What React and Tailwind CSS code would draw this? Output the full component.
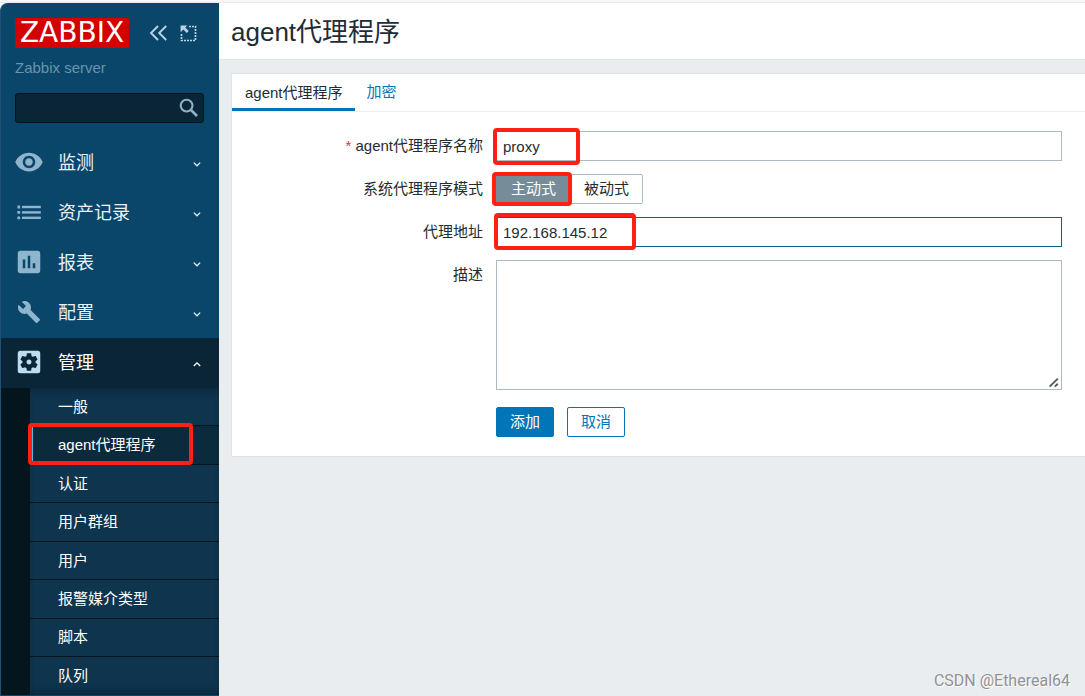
import { useState } from "react";
import {
  MdVisibility,
  MdInsertChart,
  MdBuild,
  MdSettingsApplications,
} from "react-icons/md";

function ListIcon() {
  return (
    <svg width="30" height="30" viewBox="0 0 30 30" fill="currentColor" aria-hidden="true">
      <rect x="3.4" y="8.6" width="2.8" height="2.8" rx="0.5" />
      <rect x="3.4" y="14" width="2.8" height="2.8" rx="0.5" />
      <rect x="3.4" y="19.4" width="2.8" height="2.8" rx="0.5" />
      <rect x="8" y="8.8" width="18.8" height="2.4" />
      <rect x="8" y="14.2" width="18.8" height="2.4" />
      <rect x="8" y="19.6" width="18.8" height="2.4" />
    </svg>
  );
}

function Chevron({ up }) {
  return (
    <svg width="8" height="8" viewBox="0 0 8 8" fill="none" stroke="currentColor" strokeWidth="1.3" aria-hidden="true">
      <path d={up ? "M0.8 7 4 3.8l3.2 3.2" : "M0.8 3.6 4 6.8l3.2-3.2"} />
    </svg>
  );
}

function CollapseIcon() {
  return (
    <svg width="18" height="16" viewBox="0 0 18 16" fill="none" stroke="currentColor" strokeWidth="1.9" aria-hidden="true">
      <path d="M9 1 2 8l7 7M17.2 1l-7 7 7 7" />
    </svg>
  );
}

function KioskIcon() {
  return (
    <svg width="17" height="17" viewBox="0 0 17 17" fill="none" aria-hidden="true">
      <path
        d="M9 1.5h6.5v14H1.5V8.5"
        stroke="currentColor"
        strokeWidth="1.7"
        strokeDasharray="2 1"
      />
      <path d="M0.6 0.6h6.6L5.3 2.6l3.4 3.4-1.9 1.9-3.4-3.4-2.8 2.7z" fill="currentColor" />
    </svg>
  );
}

function SearchIcon() {
  return (
    <svg width="20" height="20" viewBox="0 0 20 20" fill="none" stroke="currentColor" aria-hidden="true">
      <circle cx="7.6" cy="7.6" r="5.9" strokeWidth="2.1" />
      <path d="m12 12 6 6" strokeWidth="2.6" />
    </svg>
  );
}

function GripIcon() {
  return (
    <svg
      width="13"
      height="13"
      viewBox="0 0 13 13"
      fill="none"
      stroke="#54585b"
      strokeWidth="1.9"
      className="pointer-events-none absolute right-px bottom-px bg-white"
      aria-hidden="true"
    >
      <path d="M1.6 10.6 9.8 2.6M6.8 10.6l3-2.8" />
    </svg>
  );
}

const sections = [
  { label: "监测", icon: <MdVisibility size={30} /> },
  { label: "资产记录", icon: <ListIcon /> },
  { label: "报表", icon: <MdInsertChart size={30} /> },
  { label: "配置", icon: <MdBuild size={24} /> },
];

const adminPages = [
  "一般",
  "agent代理程序",
  "认证",
  "用户群组",
  "用户",
  "报警媒介类型",
  "脚本",
  "队列",
];

function Highlight({ className }) {
  return (
    <span
      aria-hidden="true"
      className={`pointer-events-none absolute z-10 rounded border-4 border-[#ff2014] ${className}`}
    />
  );
}

function Sidebar() {
  return (
    <aside className="flex w-[219px] shrink-0 flex-col rounded-tl-lg border-l border-[#1f5272] bg-[#0a466a] pb-px">
      <div className="flex items-center pt-[15px] pl-[14px]">
        <a
          href="#home"
          className="flex h-[30px] w-[114px] items-center justify-center bg-[#d40000] font-['DejaVu_Sans',sans-serif] text-[28px] leading-none text-white"
        >
          ZABBIX
        </a>
        <button type="button" aria-label="Collapse sidebar" className="ml-5 text-[#b9d3e3]">
          <CollapseIcon />
        </button>
        <button type="button" aria-label="Kiosk mode" className="ml-[13px] text-[#b9d3e3]">
          <KioskIcon />
        </button>
      </div>
      <div className="mt-[10px] pl-[14px] text-[15px] leading-5 text-[#6a93ac]">Zabbix server</div>
      <form role="search" className="mr-[15px] ml-[14px] mt-[15px] flex h-[30px] items-center rounded-[3px] border border-[#03121b] bg-[#0a2636] pr-1">
        <input type="text" aria-label="Search" className="h-full min-w-0 flex-1 bg-transparent px-2 text-white outline-none" />
        <button type="button" aria-label="Submit search" className="text-[#8fb0c6]">
          <SearchIcon />
        </button>
      </form>
      <nav className="mt-[15px] flex grow flex-col">
        {sections.map((s) => (
          <a key={s.label} href="#section" className="flex h-[50px] shrink-0 items-center pr-[18px] pl-[13px] text-[18px] text-[#e8f2f8]">
            <span className="flex w-[30px] justify-center pb-[2px] text-[#8fb5cd]">{s.icon}</span>
            <span className="ml-[14px] flex-1">{s.label}</span>
            <Chevron />
          </a>
        ))}
        <a href="#administration" className="flex h-[50px] shrink-0 items-center bg-[#0a2636] pr-[18px] pl-[13px] text-[18px] text-white">
          <span className="flex w-[30px] justify-center pb-[2px] text-[#bcdcf0]">
            <MdSettingsApplications size={30} />
          </span>
          <span className="ml-[14px] flex-1">管理</span>
          <Chevron up />
        </a>
        <div className="flex grow bg-[#04151e] pl-[29px]">
          <ul className="flex grow flex-col bg-[#0f344d] shadow-[inset_0_8px_8px_-6px_#0a2636,inset_0_-8px_8px_-6px_#0a2636]">
            {adminPages.map((p) => {
              const active = p === "agent代理程序";
              return (
                <li key={p} className="relative flex min-h-[38px] flex-1 border-b border-[#04151e] last:border-b-0">
                  <a
                    href="#page"
                    aria-current={active ? "page" : undefined}
                    className={`flex grow items-center border-l-[3px] pt-px pl-[25px] text-[15px] text-white ${
                      active ? "border-[#5fb4e6] bg-[#0b2a3c]" : "border-transparent"
                    }`}
                  >
                    {p}
                  </a>
                  {active && <Highlight className="-top-[3px] -left-[2px] h-[42px] w-[165px]" />}
                </li>
              );
            })}
          </ul>
        </div>
      </nav>
    </aside>
  );
}

function Row({ label, htmlFor, required, children }) {
  return (
    <div className="flex">
      <label htmlFor={htmlFor} className="w-[251px] shrink-0 text-right leading-[30px]">
        {required && <span className="text-[#e33734]">* </span>}
        {label}
      </label>
      <div className="relative ml-[13px] flex flex-1">{children}</div>
    </div>
  );
}

function ProxyForm() {
  const [name, setName] = useState("proxy");
  const [address, setAddress] = useState("192.168.145.12");
  const [mode, setMode] = useState("active");

  return (
    <form className="mt-[13px] ml-3 border border-r-0 border-[#dfe4e7] bg-white pb-[19px]">
      <div role="tablist" className="flex border-b border-[#ebeef0]">
        <button type="button" role="tab" aria-selected="true" className="border-b-[3px] border-[#0275b8] pt-[3px] pr-3 pl-[13px] leading-[31px]">
          agent代理程序
        </button>
        <button type="button" role="tab" aria-selected="false" className="px-3 text-[#0275b8]">
          加密
        </button>
      </div>
      <div className="flex flex-col gap-[13px] pt-[19px] pr-[23px]">
        <Row label="agent代理程序名称" htmlFor="name" required>
          <input
            id="name"
            value={name}
            onChange={(e) => setName(e.target.value)}
            className="h-[30px] w-full border border-[#acbbc2] px-[6px] outline-none"
          />
          <Highlight className="-top-[3px] -left-[3px] h-[37px] w-[87px]" />
        </Row>
        <Row label="系统代理程序模式">
          <label className="flex h-[30px] cursor-pointer items-center rounded-l-[2px] border border-[#acbbc2] px-[14px] has-checked:border-[#768d99] has-checked:bg-[#768d99] has-checked:text-white">
            <input type="radio" name="mode" className="sr-only" checked={mode === "active"} onChange={() => setMode("active")} />
            主动式
          </label>
          <label className="flex h-[30px] cursor-pointer items-center rounded-r-[2px] border border-l-0 border-[#acbbc2] px-[13px] has-checked:border-[#768d99] has-checked:bg-[#768d99] has-checked:text-white">
            <input type="radio" name="mode" className="sr-only" checked={mode === "passive"} onChange={() => setMode("passive")} />
            被动式
          </label>
          <Highlight className="-top-[2px] -left-1 h-[34px] w-20" />
        </Row>
        <Row label="代理地址" htmlFor="address">
          <input
            id="address"
            value={address}
            onChange={(e) => setAddress(e.target.value)}
            className="h-[30px] w-full border border-[#0a5f94] px-[6px] outline-none"
          />
          <Highlight className="-top-[4px] -left-[2px] h-[37px] w-[142px]" />
        </Row>
        <Row label="描述" htmlFor="description">
          <textarea id="description" className="h-[130px] w-full resize-y border border-[#acbbc2] px-[6px] py-1 outline-none" />
          <GripIcon />
        </Row>
      </div>
      <div className="mt-[17px] ml-[264px] flex gap-[13px]">
        <button type="button" className="h-[30px] rounded-[2px] border border-[#0275b8] bg-[#0275b8] px-[13px] text-white">
          添加
        </button>
        <button type="button" className="h-[30px] rounded-[2px] border border-[#0275b8] bg-white px-[13px] text-[#0275b8]">
          取消
        </button>
      </div>
    </form>
  );
}

export default function App() {
  return (
    <div className="flex min-h-screen flex-col bg-white font-['Liberation_Sans','Noto_Sans_CJK_SC',sans-serif] text-[15px] text-[#1f2c33]">
      <div className="h-[3px] border-b border-[#e9e9e9] bg-[#f7f7f7]" />
      <div className="flex grow">
        <Sidebar />
        <main className="relative flex min-w-0 flex-1 flex-col bg-[#e9edf0]">
          <header className="border-b border-[#dfe4e7] bg-white pt-[2px] pl-3">
            <h1 className="text-[26px] leading-[54px]">agent代理程序</h1>
          </header>
          <ProxyForm />
          <span className="absolute right-[15px] bottom-[5px] font-['Roboto',sans-serif] text-[16px] leading-5 text-[#8f9396] [text-shadow:1px_1px_0_#ffffff]">
            CSDN @Ethereal64
          </span>
        </main>
      </div>
    </div>
  );
}
